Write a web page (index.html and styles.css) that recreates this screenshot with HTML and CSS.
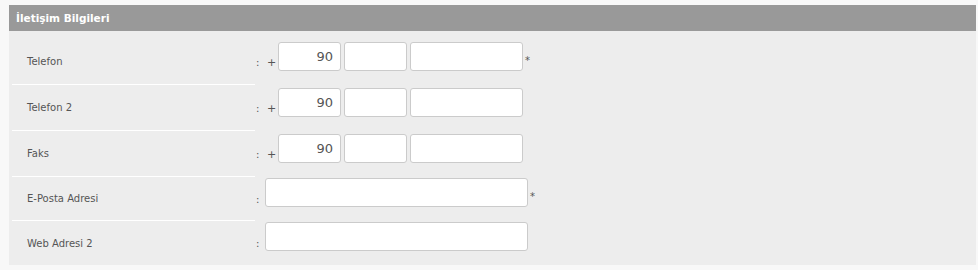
FILE: index.html
```html
<!DOCTYPE HTML>
<html>
<head>
  <meta charset="utf-8">
  <link rel="stylesheet" href="styles.css">
</head>
<body>
  <div class="panel">
    <div class="panel-title">İletişim Bilgileri</div>
    <div class="panel-body">

      <div class="row">
        <div class="label">Telefon</div>
        <div class="sep">:</div>
        <div class="plus">+</div>
        <div class="fields">
          <input type="text" class="tel-code" value="90">
          <input type="text" class="tel-area">
          <input type="text" class="tel-num">
          <span class="req">*</span>
        </div>
      </div>

      <div class="row">
        <div class="label">Telefon 2</div>
        <div class="sep">:</div>
        <div class="plus">+</div>
        <div class="fields">
          <input type="text" class="tel-code" value="90">
          <input type="text" class="tel-area">
          <input type="text" class="tel-num">
        </div>
      </div>

      <div class="row">
        <div class="label">Faks</div>
        <div class="sep">:</div>
        <div class="plus">+</div>
        <div class="fields">
          <input type="text" class="tel-code" value="90">
          <input type="text" class="tel-area">
          <input type="text" class="tel-num">
        </div>
      </div>

      <div class="row row-short">
        <div class="label">E-Posta Adresi</div>
        <div class="sep sep-wide">:</div>
        <div class="fields fields-short">
          <input type="text" class="wide">
          <span class="req">*</span>
        </div>
      </div>

      <div class="row row-short last">
        <div class="label">Web Adresi 2</div>
        <div class="sep sep-wide">:</div>
        <div class="fields fields-short">
          <input type="text" class="wide">
        </div>
      </div>

    </div>
  </div>
</body>
</html>
```

FILE: styles.css
```css
body {
  margin: 0;
  background: #f8f8f8;
  font-family: "DejaVu Sans", Verdana, sans-serif;
  font-size: 10px;
  color: #555;
}
.panel {
  margin: 5px 2px 0 9px;
}
.panel-title {
  height: 26px;
  line-height: 26px;
  background: #999;
  color: #fff;
  font-weight: bold;
  font-size: 10.5px;
  padding-left: 7px;
}
.panel-body {
  background: #ededed;
  padding: 8px 0 0 0;
  height: 226px;
}
.row {
  display: flex;
  height: 46px;
}
.row-short {
  height: 44px;
}
.label {
  width: 228px;
  margin-left: 3px;
  padding-left: 15px;
  border-bottom: 1px solid #fff;
  display: flex;
  align-items: center;
}
.last .label {
  border-bottom: none;
}
.sep {
  display: flex;
  align-items: center;
  width: 12px;
  padding-left: 1px;
  box-sizing: border-box;
}
.sep-wide {
  width: 10px;
}
.plus {
  display: flex;
  align-items: center;
  font-size: 11px;
  width: 11px;
}
.fields {
  display: flex;
  align-items: flex-start;
  padding-top: 3px;
  gap: 3px;
}
.fields-short {
  padding-top: 1px;
}
input {
  box-sizing: border-box;
  height: 29px;
  margin: 0;
  border: 1px solid #cbcbcb;
  border-radius: 3px;
  background: #fff;
  font-family: "DejaVu Sans", Verdana, sans-serif;
  font-size: 13px;
  color: #555;
  padding: 0 7px;
}
.tel-code {
  width: 63px;
  text-align: right;
}
.tel-area {
  width: 63px;
}
.tel-num {
  width: 113px;
}
.wide {
  width: 263px;
}
.req {
  font-size: 10px;
  color: #555;
  margin-left: -1px;
  padding-top: 13px;
}
```
